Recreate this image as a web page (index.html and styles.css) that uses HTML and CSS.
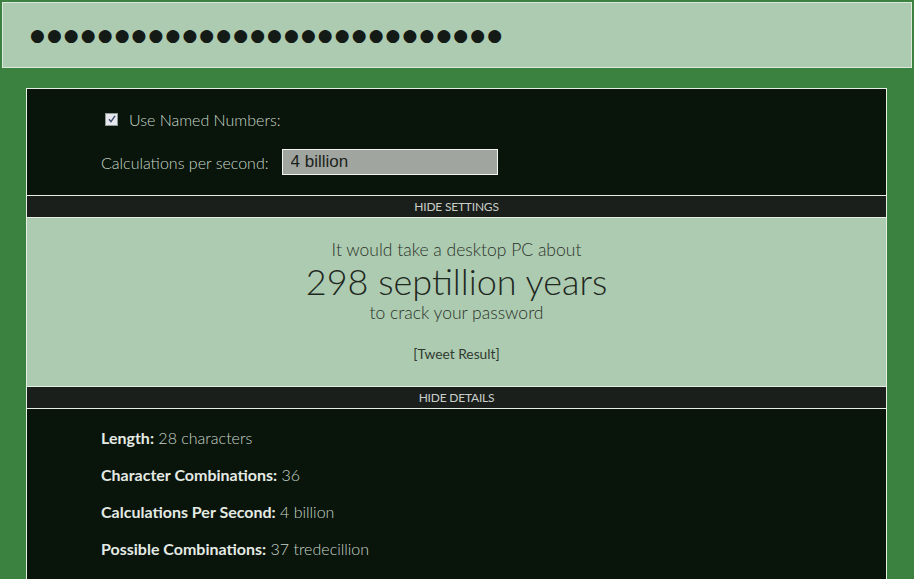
FILE: index.html
```html
<!DOCTYPE html>
<html lang="en">
<head>
    <meta charset="UTF-8">
    <meta name="viewport" content="width=device-width, initial-scale=1.0">
    <title>How Secure Is My Password?</title>
    <link rel="stylesheet" href="styles.css">
</head>
<body>
    <div class="password-box">
        <span class="dots">●●●●●●●●●●●●●●●●●●●●●●●●●●●●</span>
    </div>

    <div class="panel">
        <div class="settings">
            <div class="setting-row">
                <span class="checkbox">
                    <svg width="8" height="8" viewBox="0 0 8 8"><path d="M1 4.2 L3 6.6 L7 0.8" fill="none" stroke="#3a4a66" stroke-width="1.4"/></svg>
                </span>
                <label class="check-label">Use Named Numbers:</label>
            </div>
            <div class="setting-row">
                <label for="calcs">Calculations per second:</label>
                <input type="text" id="calcs" class="calc-input" value="4 billion">
            </div>
        </div>
        <div class="toggle-bar">HIDE SETTINGS</div>

        <div class="result">
            <div class="result-intro">It would take a desktop PC about</div>
            <div class="result-time">298 septillion years</div>
            <div class="result-outro">to crack your password</div>
            <a href="#" class="tweet">[Tweet Result]</a>
        </div>
        <div class="toggle-bar">HIDE DETAILS</div>

        <div class="details">
            <p><strong>Length:</strong> 28 characters</p>
            <p><strong>Character Combinations:</strong> 36</p>
            <p><strong>Calculations Per Second:</strong> 4 billion</p>
            <p><strong>Possible Combinations:</strong> 37 tredecillion</p>
        </div>
    </div>
</body>
</html>
```

FILE: styles.css
```css
body, html {
    margin: 0;
    padding: 0;
    font-family: 'Lato', 'Open Sans', sans-serif;
    background-color: #3b8241;
}
body {
    padding-top: 2px;
}
.password-box {
    margin: 0 2px 0 2px;
    height: 64px;
    border: 1px solid #dce9dc;
    background-color: #adcbb0;
    padding-left: 27px;
    display: flex;
    align-items: center;
}
.dots {
    font-family: 'DejaVu Sans', sans-serif;
    font-size: 17px;
    letter-spacing: 2.1px;
    color: #141a15;
}
.panel {
    margin: 20px 27px 0 26px;
    border: 1px solid #e6eee6;
    border-bottom: none;
}
.settings {
    background-color: #09140b;
    padding: 18px 74px 20px;
    display: flex;
    flex-direction: column;
    gap: 18px;
}
.setting-row {
    display: flex;
    align-items: center;
    min-height: 24px;
    color: #c8d8c8;
    font-size: 16px;
    font-weight: 300;
}
.setting-row:first-child {
    padding-left: 4px;
}
.checkbox {
    width: 11px;
    height: 11px;
    border: 1px solid #8e9a96;
    background-color: #e6e8ee;
    display: flex;
    align-items: center;
    justify-content: center;
    margin-right: 11px;
}
.calc-input {
    margin-left: 13px;
    width: 216px;
    height: 26px;
    box-sizing: border-box;
    border: 1px solid #f2f4f2;
    background-color: #a0a59f;
    padding: 0 8px;
    font-family: 'Liberation Sans', Arial, sans-serif;
    font-size: 17px;
    color: #1c1f1c;
}
.toggle-bar {
    background-color: #1b1f1c;
    border-top: 1px solid #e6eee6;
    border-bottom: 1px solid #e6eee6;
    height: 21px;
    line-height: 21px;
    text-align: center;
    font-size: 12px;
    color: #c9cec9;
    letter-spacing: -0.2px;
}
.result {
    background-color: #adcbb0;
    text-align: center;
    color: #2a322b;
    font-weight: 300;
    padding: 21px 0 23px;
}
.result-intro {
    font-size: 17.5px;
    line-height: 22px;
}
.result-time {
    font-size: 36px;
    line-height: 38px;
    margin-top: 1px;
    color: #1f281f;
}
.result-outro {
    font-size: 17.5px;
    line-height: 20px;
    margin-top: 3px;
}
.tweet {
    display: inline-block;
    margin-top: 22px;
    font-size: 13.8px;
    line-height: 18px;
    font-weight: 400;
    color: #2f3a30;
    text-decoration: none;
}
.details {
    background-color: #09140b;
    padding: 19px 74px 30px;
    color: #c8d4c8;
    font-size: 16px;
    font-weight: 300;
}
.details p {
    margin: 0 0 17px;
    line-height: 20px;
}
.details strong {
    font-weight: 700;
    color: #e4eae4;
}
```
